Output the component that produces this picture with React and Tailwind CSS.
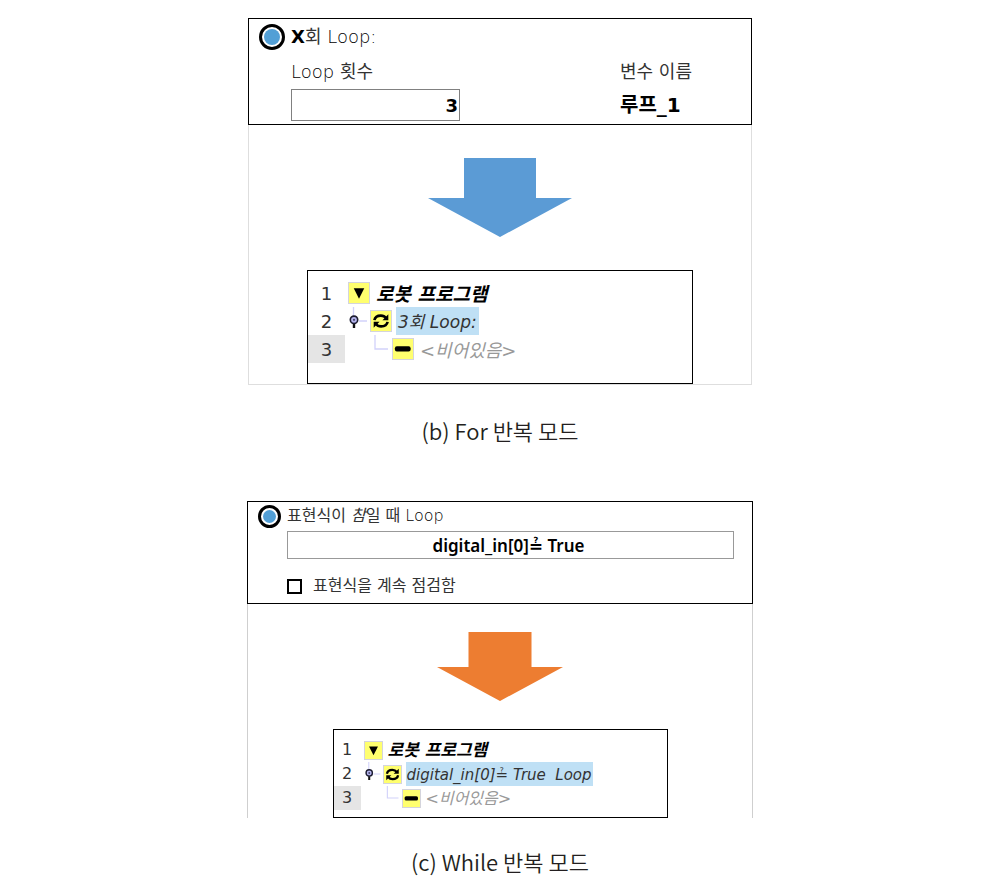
const ui = "font-['DejaVu_Sans','Noto_Sans_CJK_KR',sans-serif]";

function Radio({ className, ...props }) {
  return (
    <input
      type="radio"
      defaultChecked
      className={`shrink-0 appearance-none rounded-full border-3 border-black bg-[#529fd6] bg-clip-content p-[2px] ${className}`}
      {...props}
    />
  );
}

function Arrow({ className }) {
  return (
    <svg viewBox="0 0 144 79" preserveAspectRatio="none" className={`mx-auto block ${className}`} aria-hidden="true">
      <path d="M36 0H108V40H144L72 79L0 40H36Z" fill="currentColor" />
    </svg>
  );
}

const glyphs = {
  expand: <path d="M5 5.5H16L10.5 16.5Z" />,
  loop: (
    <g fill="none" stroke="currentColor" strokeWidth="2.8">
      <path d="M3.6 9.6C4.2 6.2 7.4 4.8 10.4 4.8C12.8 4.8 14.6 5.8 15.8 7.4" />
      <path d="M17.4 11.4C16.8 14.8 13.6 16.2 10.6 16.2C8.2 16.2 6.4 15.2 5.2 13.6" />
      <path d="M18.2 3.4V9.6H12Z" fill="currentColor" stroke="none" />
      <path d="M2.8 17.6V11.4H9Z" fill="currentColor" stroke="none" />
    </g>
  ),
  empty: <rect x="2" y="7.6" width="16.5" height="5.4" rx="2" />,
};

function NodeIcon({ kind, className }) {
  return (
    <span className={`shrink-0 border border-[#d4d4dc] bg-[#ffff6e] text-black ${className}`}>
      <svg viewBox="0 0 21 21" fill="currentColor" className="block size-full" aria-hidden="true">
        {glyphs[kind]}
      </svg>
    </span>
  );
}

function PinBranch({ className }) {
  return (
    <svg viewBox="0 0 22 28" className={`shrink-0 ${className}`} aria-hidden="true">
      <path d="M5.5 0V9M11 14H19" stroke="#d2d2fa" strokeWidth="1.3" fill="none" />
      <path d="M6 16V21" stroke="#111" strokeWidth="2.4" />
      <circle cx="6" cy="12.8" r="3.7" fill="#b4b4ee" stroke="#1c1c30" strokeWidth="1.6" />
      <circle cx="6" cy="12.8" r="1.1" fill="#44446a" />
    </svg>
  );
}

function ElbowBranch({ className }) {
  return (
    <svg viewBox="0 0 22 28" className={`shrink-0 ${className}`} aria-hidden="true">
      <path d="M5 0V14H18" stroke="#d2d2fa" strokeWidth="1.3" fill="none" />
    </svg>
  );
}

const treeSizes = {
  large: {
    box: "w-[386px] pt-2 pb-5",
    row: "h-7",
    number: "w-[37px] text-[18px]",
    icon: "size-[22px]",
    branch: "h-7 w-[22px]",
    spacer: "w-[22px]",
    text: "ml-1 px-[2px] pt-[3px]",
    title: "text-[19px]",
    command: "text-[17px]",
    hint: "text-[18px]",
  },
  small: {
    box: "w-[335px] pt-2 pb-[7px]",
    row: "h-6",
    number: "w-[27px] text-[16px]",
    icon: "size-[19px]",
    branch: "h-6 w-[19px]",
    spacer: "w-[19px]",
    text: "ml-1 px-[1px] pt-[2px]",
    title: "text-[17px]",
    command: "text-[15px]",
    hint: "text-[16px]",
  },
};

function ProgramTree({ size, command }) {
  const s = treeSizes[size];
  const row = `flex items-center ${s.row}`;
  const number = `flex h-full shrink-0 items-center justify-center text-[#333] ${s.number}`;
  const text = `flex h-full items-center whitespace-nowrap italic ${s.text}`;
  return (
    <ol className={`mx-auto max-w-full border border-black bg-white ${s.box}`}>
      <li className={row}>
        <span className={number}>1</span>
        <span className="w-[3px] shrink-0" />
        <NodeIcon kind="expand" className={s.icon} />
        <span className={`font-bold text-black ${s.title} ${text}`}>로봇 프로그램</span>
      </li>
      <li className={row}>
        <span className={number}>2</span>
        <span className="w-[3px] shrink-0" />
        <PinBranch className={s.branch} />
        <NodeIcon kind="loop" className={s.icon} />
        <span className={`bg-[#bfe0f5] text-[#333] ${s.command} ${text}`}>{command}</span>
      </li>
      <li className={row}>
        <span className={`bg-[#e5e5e5] ${number}`}>3</span>
        <span className="w-[3px] shrink-0" />
        <span className={`shrink-0 ${s.spacer}`} />
        <ElbowBranch className={s.branch} />
        <NodeIcon kind="empty" className={s.icon} />
        <span className={`text-[#999] ${s.hint} ${text}`}>&lt;비어있음&gt;</span>
      </li>
    </ol>
  );
}

function Caption({ children }) {
  return (
    <figcaption className="text-center font-['Noto_Sans_CJK_KR',sans-serif] text-[22px] leading-8 font-[350] text-[#231f20]">
      {children}
    </figcaption>
  );
}

export default function App() {
  return (
    <main className={`flex flex-col items-center bg-white pt-[18px] text-[#333] ${ui}`}>
      <figure className="w-full max-w-[504px]">
        <div className="border-x border-b border-[#dedede]">
          <section className="-mx-px border border-black pt-[5px] pr-[57px] pb-[3px] pl-[10px]">
            <div className="flex items-center gap-[6px]">
              <Radio id="count-loop" name="count-mode" className="size-[26px]" />
              <label htmlFor="count-loop" className="text-[18px] leading-6">
                <b className="font-bold text-black">X</b>회 <span className="font-extralight text-black">Loop:</span>
              </label>
            </div>
            <div className="flex justify-between pl-8">
              <div className="w-[169px]">
                <label htmlFor="loop-count" className="block pt-[10px] pb-[5px] text-[18px] leading-6">
                  <span className="font-extralight text-black">Loop</span> 횟수
                </label>
                <input
                  id="loop-count"
                  type="text"
                  defaultValue="3"
                  className="block h-8 w-full border border-[#808080] px-px text-right text-[18px] font-bold text-black"
                />
              </div>
              <div className="w-[74px] whitespace-nowrap">
                <div className="pt-[10px] pb-[5px] text-[18px] leading-6">변수 이름</div>
                <div className="text-[20px] leading-8 font-bold text-black">루프_1</div>
              </div>
            </div>
          </section>
          <Arrow className="mt-[33px] h-[79px] w-36 text-[#5b9bd5]" />
          <div className="mt-[33px]">
            <ProgramTree size="large" command="3회 Loop:" />
          </div>
        </div>
        <div className="pt-[29px]">
          <Caption>(b) For 반복 모드</Caption>
        </div>
      </figure>

      <figure className="mt-[55px] w-full max-w-[506px]">
        <div className="border-x border-[#cfcfcf]">
          <section className="-mx-px border border-black pt-[2px] pr-[18px] pb-[5px] pl-[10px]">
            <div className="flex items-center gap-[6px]">
              <Radio id="while-loop" name="while-mode" className="size-[23px]" />
              <label htmlFor="while-loop" className="text-[16px] leading-6">
                표현식이 <i>참</i>일 때 <span className="font-extralight text-black">Loop</span>
              </label>
            </div>
            <div className="pt-[3px] pl-[29px]">
              <input
                type="text"
                aria-label="표현식"
                defaultValue="digital_in[0]≟ True"
                className="block h-7 w-full border border-[#999] pr-1 text-center font-['Noto_Sans','DejaVu_Sans',sans-serif] text-[17px] font-semibold text-black"
              />
              <div className="mt-[15px] flex items-center gap-[11px]">
                <input
                  id="keep-checking"
                  type="checkbox"
                  className="size-[15px] shrink-0 appearance-none border-2 border-black bg-white"
                />
                <label htmlFor="keep-checking" className="text-[16px] leading-6">
                  표현식을 계속 점검함
                </label>
              </div>
            </div>
          </section>
          <Arrow className="mt-7 h-[69px] w-[126px] text-[#ed7d31]" />
          <div className="mt-7">
            <ProgramTree size="small" command={"digital_in[0]≟ True\u00a0 Loop"} />
          </div>
        </div>
        <div className="pt-[27px]">
          <Caption>(c) While 반복 모드</Caption>
        </div>
      </figure>
    </main>
  );
}
